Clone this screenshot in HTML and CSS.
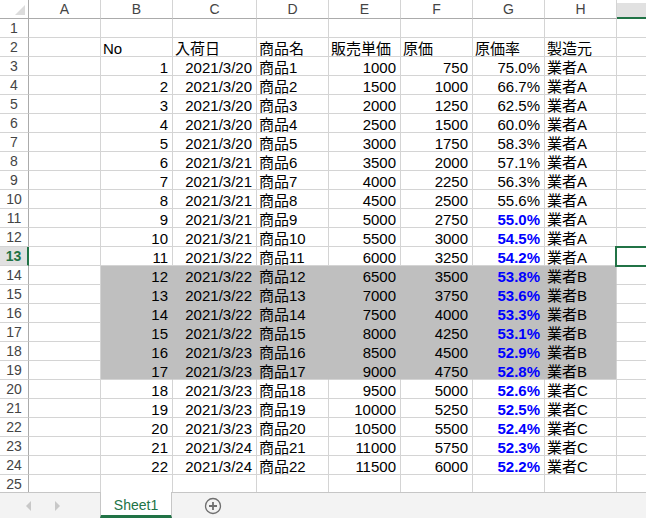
FILE: index.html
```html
<!DOCTYPE html>
<html lang="ja">
<head>
<meta charset="utf-8">
<title>Sheet1</title>
<link rel="stylesheet" href="styles.css">
</head>
<body>
<div class="app">
<div class="sheet">
<div class="corner"><svg width="14" height="14" viewBox="0 0 14 14"><polygon points="12,2 12,12 2,12" fill="#dcdcdc"/></svg></div>
<div class="ch">A</div><div class="ch">B</div><div class="ch">C</div><div class="ch">D</div><div class="ch">E</div><div class="ch">F</div><div class="ch">G</div><div class="ch">H</div><div class="ch ch-sel"></div>

<div class="rh">1</div><div class="c"></div><div class="c"></div><div class="c"></div><div class="c"></div><div class="c"></div><div class="c"></div><div class="c"></div><div class="c"></div><div class="c"></div>

<div class="rh">2</div><div class="c"></div><div class="c">No</div><div class="c">入荷日</div><div class="c">商品名</div><div class="c">販売単価</div><div class="c">原価</div><div class="c">原価率</div><div class="c">製造元</div><div class="c"></div>

<div class="rh">3</div><div class="c"></div><div class="c r">1</div><div class="c r">2021/3/20</div><div class="c">商品1</div><div class="c r">1000</div><div class="c r">750</div><div class="c r">75.0%</div><div class="c">業者A</div><div class="c"></div>
<div class="rh">4</div><div class="c"></div><div class="c r">2</div><div class="c r">2021/3/20</div><div class="c">商品2</div><div class="c r">1500</div><div class="c r">1000</div><div class="c r">66.7%</div><div class="c">業者A</div><div class="c"></div>
<div class="rh">5</div><div class="c"></div><div class="c r">3</div><div class="c r">2021/3/20</div><div class="c">商品3</div><div class="c r">2000</div><div class="c r">1250</div><div class="c r">62.5%</div><div class="c">業者A</div><div class="c"></div>
<div class="rh">6</div><div class="c"></div><div class="c r">4</div><div class="c r">2021/3/20</div><div class="c">商品4</div><div class="c r">2500</div><div class="c r">1500</div><div class="c r">60.0%</div><div class="c">業者A</div><div class="c"></div>
<div class="rh">7</div><div class="c"></div><div class="c r">5</div><div class="c r">2021/3/20</div><div class="c">商品5</div><div class="c r">3000</div><div class="c r">1750</div><div class="c r">58.3%</div><div class="c">業者A</div><div class="c"></div>
<div class="rh">8</div><div class="c"></div><div class="c r">6</div><div class="c r">2021/3/21</div><div class="c">商品6</div><div class="c r">3500</div><div class="c r">2000</div><div class="c r">57.1%</div><div class="c">業者A</div><div class="c"></div>
<div class="rh">9</div><div class="c"></div><div class="c r">7</div><div class="c r">2021/3/21</div><div class="c">商品7</div><div class="c r">4000</div><div class="c r">2250</div><div class="c r">56.3%</div><div class="c">業者A</div><div class="c"></div>
<div class="rh">10</div><div class="c"></div><div class="c r">8</div><div class="c r">2021/3/21</div><div class="c">商品8</div><div class="c r">4500</div><div class="c r">2500</div><div class="c r">55.6%</div><div class="c">業者A</div><div class="c"></div>
<div class="rh">11</div><div class="c"></div><div class="c r">9</div><div class="c r">2021/3/21</div><div class="c">商品9</div><div class="c r">5000</div><div class="c r">2750</div><div class="c r p">55.0%</div><div class="c">業者A</div><div class="c"></div>
<div class="rh">12</div><div class="c"></div><div class="c r">10</div><div class="c r">2021/3/21</div><div class="c">商品10</div><div class="c r">5500</div><div class="c r">3000</div><div class="c r p">54.5%</div><div class="c">業者A</div><div class="c"></div>
<div class="rh rh-sel">13</div><div class="c"></div><div class="c r">11</div><div class="c r">2021/3/22</div><div class="c">商品11</div><div class="c r">6000</div><div class="c r">3250</div><div class="c r p">54.2%</div><div class="c">業者A</div><div class="c sel"></div>

<div class="rh">14</div><div class="c"></div><div class="c r g">12</div><div class="c r g">2021/3/22</div><div class="c g">商品12</div><div class="c r g">6500</div><div class="c r g">3500</div><div class="c r p g">53.8%</div><div class="c g ge">業者B</div><div class="c"></div>
<div class="rh">15</div><div class="c"></div><div class="c r g">13</div><div class="c r g">2021/3/22</div><div class="c g">商品13</div><div class="c r g">7000</div><div class="c r g">3750</div><div class="c r p g">53.6%</div><div class="c g ge">業者B</div><div class="c"></div>
<div class="rh">16</div><div class="c"></div><div class="c r g">14</div><div class="c r g">2021/3/22</div><div class="c g">商品14</div><div class="c r g">7500</div><div class="c r g">4000</div><div class="c r p g">53.3%</div><div class="c g ge">業者B</div><div class="c"></div>
<div class="rh">17</div><div class="c"></div><div class="c r g">15</div><div class="c r g">2021/3/22</div><div class="c g">商品15</div><div class="c r g">8000</div><div class="c r g">4250</div><div class="c r p g">53.1%</div><div class="c g ge">業者B</div><div class="c"></div>
<div class="rh">18</div><div class="c"></div><div class="c r g">16</div><div class="c r g">2021/3/23</div><div class="c g">商品16</div><div class="c r g">8500</div><div class="c r g">4500</div><div class="c r p g">52.9%</div><div class="c g ge">業者B</div><div class="c"></div>
<div class="rh">19</div><div class="c"></div><div class="c r g gb">17</div><div class="c r g gb">2021/3/23</div><div class="c g gb">商品17</div><div class="c r g gb">9000</div><div class="c r g gb">4750</div><div class="c r p g gb">52.8%</div><div class="c g ge gb">業者B</div><div class="c"></div>

<div class="rh">20</div><div class="c"></div><div class="c r">18</div><div class="c r">2021/3/23</div><div class="c">商品18</div><div class="c r">9500</div><div class="c r">5000</div><div class="c r p">52.6%</div><div class="c">業者C</div><div class="c"></div>
<div class="rh">21</div><div class="c"></div><div class="c r">19</div><div class="c r">2021/3/23</div><div class="c">商品19</div><div class="c r">10000</div><div class="c r">5250</div><div class="c r p">52.5%</div><div class="c">業者C</div><div class="c"></div>
<div class="rh">22</div><div class="c"></div><div class="c r">20</div><div class="c r">2021/3/23</div><div class="c">商品20</div><div class="c r">10500</div><div class="c r">5500</div><div class="c r p">52.4%</div><div class="c">業者C</div><div class="c"></div>
<div class="rh">23</div><div class="c"></div><div class="c r">21</div><div class="c r">2021/3/24</div><div class="c">商品21</div><div class="c r">11000</div><div class="c r">5750</div><div class="c r p">52.3%</div><div class="c">業者C</div><div class="c"></div>
<div class="rh">24</div><div class="c"></div><div class="c r">22</div><div class="c r">2021/3/24</div><div class="c">商品22</div><div class="c r">11500</div><div class="c r">6000</div><div class="c r p">52.2%</div><div class="c">業者C</div><div class="c"></div>
<div class="rh">25</div><div class="c"></div><div class="c"></div><div class="c"></div><div class="c"></div><div class="c"></div><div class="c"></div><div class="c"></div><div class="c"></div><div class="c"></div>
</div>

<div class="tabbar">
  <div class="nav">
    <svg class="arrow" width="8" height="10" viewBox="0 0 8 10"><polygon points="6,0 6,10 1,5" fill="#c8c8c8"/></svg>
    <svg class="arrow" width="8" height="10" viewBox="0 0 8 10"><polygon points="2,0 2,10 7,5" fill="#c8c8c8"/></svg>
  </div>
  <div class="tab">Sheet1</div>
  <div class="add">
    <svg width="18" height="18" viewBox="0 0 18 18"><circle cx="9" cy="9" r="7.5" fill="none" stroke="#6f6f6f" stroke-width="1.3"/><path d="M9 5v8M5 9h8" stroke="#6f6f6f" stroke-width="1.8"/></svg>
  </div>
</div>
</div>
</body>
</html>
```
FILE: styles.css
```css
html, body {
  margin: 0;
  padding: 0;
  background: #ffffff;
}
.app {
  width: 646px;
  height: 518px;
  overflow: hidden;
  display: flex;
  flex-direction: column;
  font-family: "Liberation Sans", "Noto Sans CJK JP", sans-serif;
  color: #000;
}
.sheet {
  height: 492px;
  overflow: hidden;
  display: grid;
  grid-template-columns: 29px 72px 72px 84px 72px 72px 72px 72px 72px 40px;
  grid-template-rows: 19px;
  grid-auto-rows: 19px;
  flex: none;
}
.corner {
  box-sizing: border-box;
  border-right: 1px solid #ababab;
  border-bottom: 1px solid #ababab;
  display: flex;
  justify-content: flex-end;
  align-items: flex-end;
  padding: 0 1px 1px 0;
}
.corner svg { display: block; }
.ch {
  box-sizing: border-box;
  border-right: 1px solid #d4d4d4;
  border-bottom: 1px solid #ababab;
  display: flex;
  align-items: flex-end;
  justify-content: center;
  font-size: 14px;
  line-height: 15px;
  color: #444;
  padding-bottom: 1px;
}
.ch-sel {
  background: linear-gradient(to bottom, #ffffff 3px, #e1e1e1 3px);
  border-bottom: 2px solid #217346;
  border-right: none;
}
.rh {
  box-sizing: border-box;
  border-right: 1px solid #ababab;
  border-bottom: 1px solid #d4d4d4;
  display: flex;
  align-items: flex-end;
  justify-content: center;
  font-size: 14px;
  line-height: 15px;
  color: #444;
  padding-bottom: 1px;
}
.rh-sel {
  background: #e1e1e1;
  color: #217346;
  font-weight: bold;
  border-right: 2px solid #217346;
}
.c {
  box-sizing: border-box;
  border-right: 1px solid #d4d4d4;
  border-bottom: 1px solid #d4d4d4;
  display: flex;
  align-items: flex-end;
  justify-content: flex-start;
  padding: 0 2px 0 2px;
  font-size: 15px;
  line-height: 15px;
  white-space: nowrap;
}
.r {
  justify-content: flex-end;
  padding-right: 4px;
}
.p {
  color: #0000ff;
  font-weight: bold;
}
.g {
  background: #bfbfbf;
  border-right-color: #bfbfbf;
  border-bottom-color: #bfbfbf;
}
.ge { border-right-color: #d4d4d4; }
.gb { border-bottom-color: #d4d4d4; }
.sel { position: relative; }
.sel::after {
  content: "";
  position: absolute;
  left: -2px;
  top: -1px;
  right: -4px;
  bottom: -2px;
  border: 2px solid #217346;
}
.tabbar {
  flex: 1;
  box-sizing: border-box;
  border-top: 1px solid #c6c6c6;
  background: #f3f3f3;
  display: flex;
  align-items: stretch;
}
.nav {
  width: 100px;
  display: flex;
  align-items: center;
  padding-left: 25px;
  gap: 20px;
  box-sizing: border-box;
}
.arrow { display: block; }
.tab {
  width: 72px;
  box-sizing: border-box;
  background: #ffffff;
  border-left: 1px solid #c6c6c6;
  border-right: 1px solid #c6c6c6;
  border-bottom: 3px solid #217346;
  margin-top: -1px;
  display: flex;
  align-items: center;
  justify-content: center;
  color: #217346;
  font-size: 14px;
  padding-top: 2px;
}
.add {
  display: flex;
  align-items: center;
  padding-left: 32px;
}
.add svg { display: block; }
```
